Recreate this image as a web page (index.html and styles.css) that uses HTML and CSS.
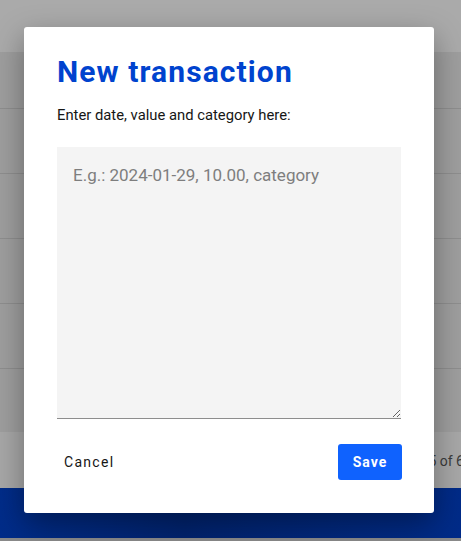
FILE: index.html
```html
<!DOCTYPE html>
<html lang="en">
<head>
<meta charset="utf-8">
<title>New transaction</title>
<link rel="stylesheet" href="styles.css">
</head>
<body>
<div class="page">
  <div class="page-header"></div>
  <div class="rows">
    <div class="row first"></div>
    <div class="row"></div>
    <div class="row"></div>
    <div class="row"></div>
    <div class="row"></div>
    <div class="row last"></div>
  </div>
  <div class="page-footer"><span class="pager">5 of 6</span></div>
  <div class="bluebar"></div>
  <div class="bottom-line"></div>
</div>

<div class="modal" role="dialog" aria-labelledby="mt">
  <h1 class="modal-title" id="mt">New transaction</h1>
  <label class="modal-label" for="entry">Enter date, value and category here:</label>
  <textarea class="modal-input" id="entry" placeholder="E.g.: 2024-01-29, 10.00, category"></textarea>
  <div class="modal-actions">
    <button class="btn-ghost" type="button">Cancel</button>
    <button class="btn-primary" type="button">Save</button>
  </div>
</div>
</body>
</html>
```

FILE: styles.css
```css
* { box-sizing: border-box; }
html, body { margin: 0; padding: 0; }
body {
  width: 461px;
  height: 541px;
  overflow: hidden;
  font-family: Roboto, "Liberation Sans", sans-serif;
  background: #a4a4a4;
  position: relative;
}
.page {
  display: flex;
  flex-direction: column;
  height: 541px;
}
.page-header {
  height: 52px;
  background: #aaaaaa;
}
.rows {
  display: flex;
  flex-direction: column;
  background: #9e9e9e;
}
.row {
  height: 65px;
  border-top: 1px solid #8e8e8e;
}
.row.first { height: 56px; border-top: none; }
.row.last { height: 64px; }
.page-footer {
  height: 56px;
  background: #a7a7a7;
  display: flex;
  align-items: center;
  justify-content: flex-end;
  overflow: hidden;
}
.pager {
  font-size: 14px;
  color: #3b3b3b;
  white-space: nowrap;
  margin-right: -3px;
  padding-top: 2px;
  flex-shrink: 0;
}
.bluebar {
  height: 50px;
  background: linear-gradient(90deg, #002c89 0%, #00236e 40%, #002b88 100%);
}
.bottom-line {
  flex: 1;
  background: #8a8a8a;
}

.modal {
  position: absolute;
  left: 24px;
  top: 27px;
  width: 410px;
  height: 486px;
  background: #ffffff;
  border-radius: 3px;
  box-shadow: 0 10px 30px rgba(0, 0, 0, 0.35);
  padding: 26px 33px 0 33px;
  display: flex;
  flex-direction: column;
}
.modal-title {
  margin: 0;
  font-family: Roboto, "Liberation Sans", sans-serif;
  font-weight: 700;
  font-size: 30px;
  line-height: 38px;
  color: #0043ce;
  letter-spacing: 1.1px;
}
.modal-label {
  margin-top: 15px;
  font-size: 14.8px;
  line-height: 18px;
  color: #161616;
}
.modal-input {
  margin-top: 23px;
  width: 344px;
  height: 272px;
  border: none;
  border-bottom: 1px solid #8d8d8d;
  background: #f4f4f4;
  padding: 17px 16px;
  font-family: Roboto, "Liberation Sans", sans-serif;
  font-size: 17px;
  line-height: 22px;
  color: #161616;
  resize: vertical;
  outline: none;
  border-radius: 0;
}
.modal-input::placeholder {
  color: #7e7e7e;
}
.modal-actions {
  margin-top: 25px;
  display: flex;
  justify-content: space-between;
  align-items: center;
}
.btn-ghost {
  border: none;
  background: transparent;
  font-family: Roboto, "Liberation Sans", sans-serif;
  font-size: 14px;
  font-weight: 400;
  letter-spacing: 1.3px;
  color: #161616;
  padding: 0 7px;
  height: 36px;
  cursor: pointer;
}
.btn-primary {
  border: none;
  background: #0f62fe;
  color: #ffffff;
  font-family: Roboto, "Liberation Sans", sans-serif;
  font-size: 14px;
  font-weight: 700;
  letter-spacing: 1px;
  width: 64px;
  height: 36px;
  border-radius: 3px;
  margin-right: -1px;
  cursor: pointer;
}
```
